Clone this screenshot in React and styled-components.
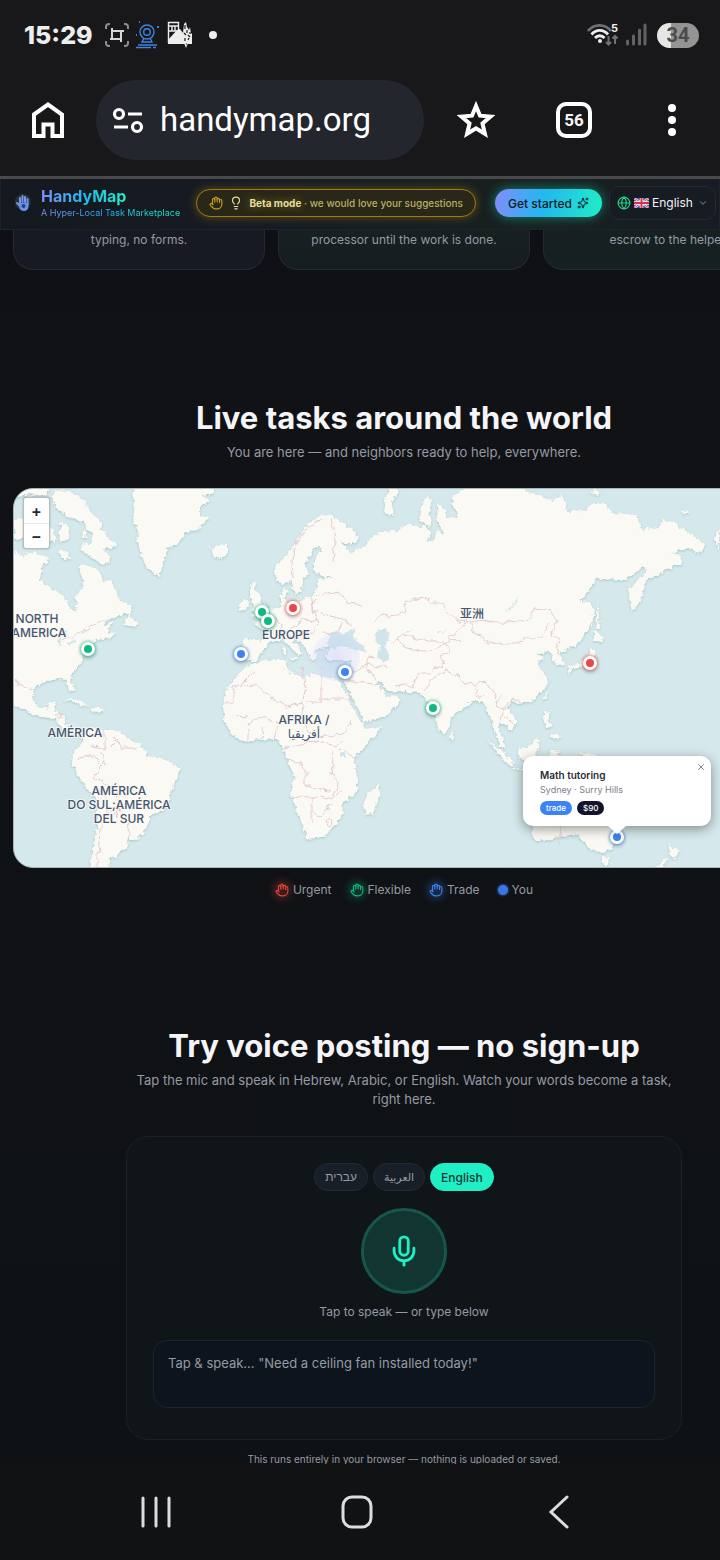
import { useState } from "react";
import styled, { createGlobalStyle, css } from "styled-components";
import {
  ChevronDown,
  Globe,
  Hand,
  Lightbulb,
  Mic,
  Sparkles,
  X,
} from "lucide-react";

const COLORS = {
  mint: "#20eec4",
  violet: "#818cf8",
  sky: "#22b8f0",
  urgent: "#ef4444",
  flexible: "#10b981",
  trade: "#3b82f6",
  text: "#f5f5f8",
  muted: "#969aa2",
};

const GlobalStyle = createGlobalStyle`
  * {
    box-sizing: border-box;
  }

  body {
    margin: 0;
    background: #0f1114;
    color: ${COLORS.text};
    font-family: Inter, "Liberation Sans", "DejaVu Sans", sans-serif;
  }

  button, input, select, textarea {
    font: inherit;
    color: inherit;
  }

  button {
    padding: 0;
    border: 0;
    background: none;
    cursor: pointer;
  }

  svg {
    display: block;
    flex-shrink: 0;
  }

  h2, p, ul {
    margin: 0;
    padding: 0;
  }
`;

const Shell = styled.div`
  display: flex;
  flex-direction: column;
  height: 100vh;
  overflow: hidden;
`;

// Phone status bar
const StatusBar = styled.div`
  display: flex;
  justify-content: space-between;
  align-items: center;
  height: 70px;
  padding: 0 21px 0 24px;
  background: #18181a;
`;

const StatusGroup = styled.div`
  display: flex;
  align-items: center;
  gap: 6px;
`;

const Clock = styled.span`
  margin-right: 6px;
  font-size: 25px;
  font-weight: 800;
  line-height: 30px;
  color: #eeeeee;
`;

const Dot = styled.span`
  width: 8px;
  height: 8px;
  margin-left: 10px;
  border-radius: 50%;
  background: #eeeeee;
`;

const Battery = styled.span`
  width: 42px;
  height: 25px;
  margin-left: 4px;
  border-radius: 13px;
  background: linear-gradient(90deg, #e6e6e6 34%, #949494 34%);
  color: #4b4b4b;
  font-family: Roboto, sans-serif;
  font-size: 20px;
  font-weight: 700;
  line-height: 25px;
  text-align: center;
`;

// Browser toolbar
const Toolbar = styled.div`
  display: flex;
  align-items: center;
  height: 109px;
  padding: 0 28px 6px 28px;
  border-bottom: 3px solid #49494c;
  background: #18181a;
`;

const AddressBar = styled.label`
  display: flex;
  flex: 1;
  align-items: center;
  gap: 16px;
  min-width: 0;
  height: 80px;
  margin: 0 32px 0 28px;
  padding: 0 16px;
  border-radius: 40px;
  background: #24262e;

  > input {
    flex: 1;
    min-width: 0;
    padding: 0;
    border: 0;
    outline: 0;
    background: none;
    font-family: Roboto, sans-serif;
    font-size: 33px;
    line-height: 44px;
    color: #ffffff;
  }
`;

const ToolbarActions = styled.div`
  display: flex;
  align-items: center;
  gap: 58px;
`;

const ToolbarButton = styled.button`
  display: grid;
  place-items: center;
  width: 40px;
  height: 40px;
`;

const TabCount = styled.span`
  width: 36px;
  height: 36px;
  border: 4px solid #ffffff;
  border-radius: 10px;
  font-family: Roboto, sans-serif;
  font-size: 17px;
  font-weight: 700;
  line-height: 28px;
`;

const Viewport = styled.main`
  flex: 1;
  min-height: 0;
  overflow: hidden;
  background: linear-gradient(#0d0f15, #101216 180px, #0f1215);
`;

// Site header
const Header = styled.header`
  display: flex;
  align-items: center;
  height: 51px;
  padding: 0 3px 2px 14px;
  border: 1px solid #1e2329;
  border-top: 0;
  background: linear-gradient(90deg, #141920, #171c24 40%, #18211f 75%, #171c24);
`;

const Brand = styled.a`
  display: flex;
  flex: 1;
  align-items: center;
  gap: 10px;
  text-decoration: none;
  white-space: nowrap;
`;

const gradientText = css`
  background: linear-gradient(90deg, ${COLORS.violet}, ${COLORS.sky} 50%, ${COLORS.mint});
  background-clip: text;
  color: transparent;
`;

const BrandText = styled.span`
  display: flex;
  flex-direction: column;
`;

const BrandName = styled.span`
  ${gradientText}
  align-self: flex-start;
  font-size: 16px;
  font-weight: 700;
  line-height: 20px;
`;

const Tagline = styled.span`
  ${gradientText}
  align-self: flex-start;
  font-size: 9px;
  line-height: 14px;
`;

const BetaPill = styled.button`
  display: flex;
  align-items: center;
  gap: 6px;
  height: 28px;
  padding: 0 12px;
  border: 1px solid #a07a14;
  border-radius: 14px;
  background: #292718;
  box-shadow: 0 0 10px #8a6a10aa;
  color: #b9ad66;
  font-size: 10px;
  font-weight: 500;
  white-space: nowrap;

  strong {
    color: #e5dba0;
    font-weight: 700;
    text-shadow: 0 0 8px #c9a22799;
  }
`;

const StartButton = styled.button`
  display: flex;
  align-items: center;
  gap: 5px;
  height: 28px;
  margin: 0 7px 0 19px;
  padding: 0 13px;
  border-radius: 14px;
  background: linear-gradient(100deg, ${COLORS.violet}, ${COLORS.sky} 45%, ${COLORS.mint});
  box-shadow: 0 0 12px #16b8a0aa;
  color: #0b1a24;
  font-size: 12px;
  font-weight: 500;
  white-space: nowrap;
`;

const LanguageBox = styled.label`
  display: flex;
  align-items: center;
  gap: 3px;
  height: 34px;
  padding: 0 7px;
  border: 1px solid #252a31;
  border-radius: 10px;
  background: #171b22;

  > select {
    appearance: none;
    width: 43px;
    padding: 0;
    border: 0;
    outline: 0;
    background: none;
    font-size: 12px;
    line-height: 16px;
  }
`;

// Page content keeps a tablet width and runs off narrow screens
const Content = styled.div`
  width: max(100%, 808px);
  padding: 0 13px;
`;

const Steps = styled.div`
  display: grid;
  grid-template-columns: repeat(3, 1fr);
  gap: 13px;
`;

const StepCard = styled.div`
  height: 40px;
  border: 1px solid #262b31;
  border-top: 0;
  border-radius: 0 0 20px 20px;
  background: ${({ $tint }) => $tint};
  color: ${COLORS.muted};
  font-size: 12px;
  line-height: 20px;
  text-align: center;
`;

const Section = styled.section`
  display: flex;
  flex-direction: column;
  align-items: center;
  padding-top: 128px;
`;

const Title = styled.h2`
  font-size: 31px;
  font-weight: 700;
  line-height: 40px;
  text-align: center;
`;

const Lead = styled.p`
  max-width: 560px;
  margin-top: 5px;
  color: ${COLORS.muted};
  font-size: 13px;
  line-height: 19px;
  text-align: center;
`;

const MapFrame = styled.div`
  position: relative;
  width: 100%;
  height: 380px;
  margin-top: 26px;
  border: 1px solid #a9b6b9;
  border-radius: 20px;
  background: #d5e8eb;
  color: #1f2937;
  overflow: hidden;

  > svg {
    width: 100%;
    height: 100%;
  }
`;

const ZoomControl = styled.div`
  position: absolute;
  top: 8px;
  left: 9px;
  display: flex;
  flex-direction: column;
  border: 1px solid #b5bfc2;
  border-radius: 3px;
  background: #ffffff;
  box-shadow: 0 0 2px #00000055;

  > button {
    width: 25px;
    height: 25px;
    font-size: 16px;
    font-weight: 600;
    line-height: 24px;
  }

  > button + button {
    border-top: 1px solid #e2eaec;
  }
`;

const Pin = styled.button`
  position: absolute;
  left: ${({ $x }) => $x - 7}px;
  top: ${({ $y }) => $y - 7}px;
  width: 14px;
  height: 14px;
  border: 3px solid #ffffff;
  border-radius: 50%;
  background: ${({ $color }) => $color};
  box-shadow: 0 0 3px 1px ${({ $color }) => $color}99, 0 2px 4px #00000044;
`;

const Popup = styled.div`
  position: absolute;
  left: 509px;
  top: 267px;
  width: 188px;
  padding: 11px 17px;
  border-radius: 10px;
  background: #ffffff;
  box-shadow: 0 3px 12px #00000066;

  &::after {
    content: "";
    position: absolute;
    left: 85px;
    bottom: -8px;
    border: solid transparent;
    border-width: 8px 9px 0;
    border-top-color: #ffffff;
  }

  > button {
    position: absolute;
    top: 6px;
    right: 5px;
    color: #666666;
  }
`;

const PopupTitle = styled.p`
  font-size: 10px;
  font-weight: 600;
  line-height: 16px;
  color: #2c2c33;
`;

const PopupPlace = styled.p`
  font-size: 9px;
  line-height: 14px;
  color: #7c828c;
`;

const TagRow = styled.div`
  display: flex;
  gap: 5px;
  margin-top: 4px;
`;

const Tag = styled.span`
  padding: 0 6px;
  border-radius: 7px;
  background: ${({ $color }) => $color};
  color: #ffffff;
  font-size: 8px;
  font-weight: 500;
  line-height: 14px;
`;

const Legend = styled.ul`
  display: flex;
  gap: 18px;
  margin-top: 13px;
  list-style: none;
`;

const LegendItem = styled.li`
  display: flex;
  align-items: center;
  gap: 4px;
  color: ${COLORS.muted};
  font-size: 12px;
  line-height: 17px;

  > svg {
    color: ${({ $color }) => $color};
    border-radius: 50%;
    background: ${({ $color }) => $color}33;
    box-shadow: 0 0 8px 1px ${({ $color }) => $color}66;
  }
`;

const YouDot = styled.span`
  width: 10px;
  height: 10px;
  border-radius: 50%;
  background: #3b76e8;
  box-shadow: 0 0 3px #3b76e8;
`;

// Voice demo
const VoiceCard = styled.form`
  display: flex;
  flex-direction: column;
  align-items: center;
  width: 100%;
  max-width: 556px;
  margin-top: 27px;
  padding: 26px;
  border: 1px solid #1a2224;
  border-radius: 22px;
  background: #101518;
`;

const LanguageTabs = styled.div`
  display: flex;
  gap: 5px;
`;

const LanguageTab = styled.button`
  height: 28px;
  padding: 0 10px;
  border: 1px solid ${({ $active }) => ($active ? COLORS.mint : "#232a33")};
  border-radius: 14px;
  background: ${({ $active }) => ($active ? COLORS.mint : "#191f28")};
  color: ${({ $active }) => ($active ? "#0c3a35" : COLORS.muted)};
  font-family: ${({ $font }) => $font};
  font-size: ${({ $size }) => $size}px;
  font-weight: ${({ $active }) => ($active ? 500 : 400)};
`;

const MicButton = styled.button`
  display: grid;
  place-items: center;
  width: 86px;
  height: 86px;
  margin-top: 17px;
  border: 3px solid #17564b;
  border-radius: 50%;
  background: #113531;
  color: ${COLORS.mint};
`;

const Hint = styled.label`
  margin: 9px 0 19px;
  color: ${COLORS.muted};
  font-size: 12px;
  line-height: 18px;
`;

const SpeechBox = styled.textarea`
  width: 100%;
  height: 68px;
  margin-bottom: 5px;
  padding: 12px 14px;
  border: 1px solid #1b2530;
  border-radius: 14px;
  outline: 0;
  background: #0d141d;
  font-size: 13px;
  line-height: 20px;
  resize: none;

  &::placeholder {
    color: ${COLORS.muted};
  }
`;

const Footnote = styled.p`
  margin-top: 12px;
  color: ${COLORS.muted};
  font-size: 10px;
  line-height: 14px;
`;

const SystemNav = styled.nav`
  display: grid;
  grid-template-columns: repeat(3, 1fr);
  justify-items: center;
  height: 96px;
  padding: 0 60px 0 55px;
  background: #111214;
  color: #dddddd;
`;

function CropIcon() {
  return (
    <svg width="24" height="24" viewBox="0 0 24 24" fill="none" strokeWidth="2">
      <path
        d="M1 6V4a3 3 0 0 1 3-3h1M19 1h1a3 3 0 0 1 3 3v2M23 18v2a3 3 0 0 1-3 3h-1M5 23H4a3 3 0 0 1-3-3v-2"
        stroke="#8d8d8d"
      />
      <path d="M8 8v9h8M5 17h3M16 19V8H8M19 8h-3M8 17v0M16 17v2M8 8V5" stroke="#d5d5d5" transform="rotate(90 12 12)" />
    </svg>
  );
}

function BeaconIcon() {
  return (
    <svg width="26" height="28" viewBox="0 0 26 28" fill="none" stroke="#3f83e0" strokeWidth="1.4">
      <circle cx="12" cy="11" r="7" />
      <circle cx="12" cy="11" r="3.3" />
      <path d="M9 17l-2 4h10l-2-4M3 24h19M1 26.5h15M18 26.5h3" />
      <path d="M23 5v2M22 6h2M1 14h1M4 1h1" strokeWidth="2" />
    </svg>
  );
}

function MosaicIcon() {
  return (
    <svg width="26" height="28" viewBox="0 0 26 28">
      <path d="M1.500 22V1.500h10V10H2M2 5h9M5 5v5M8 5v5" fill="none" stroke="#ededed" strokeWidth="1.4" />
      <path d="M1 23v-4l9-10 3-1 3 4 1-9 2-2 1 5 2 3 1-3 1 7 1-1v11z" fill="#ededed" />
      <path d="M17 22l2 5 2-5z" fill="#ededed" />
      <path
        d="M18 4v4M20 9v3M17 12l2 2M21 14l2 2M18 17v3M21 19l1-2M23 11v2M19 23h1"
        fill="none"
        stroke="#18181a"
        strokeWidth="1.2"
      />
    </svg>
  );
}

function WifiIcon() {
  return (
    <svg width="32" height="26" viewBox="0 0 32 26" fill="none" strokeWidth="2.8">
      <path d="M1 9c6-7.500 17-7.500 23 0" stroke="#707070" />
      <path d="M4.500 12.500c4.500-5.500 12-5.500 16.500 0M8 16c2.500-3 7-3 9.500 0" stroke="#ededed" />
      <circle cx="13" cy="19" r="2" fill="#ededed" />
      <path d="M21.500 14v8M19 20l2.500 2.500L24 20M28 22v-8M25.500 16.500L28 14l2.500 2.500" stroke="#707070" strokeWidth="2" />
      <text x="24" y="10" fill="#ededed" fontSize="11" fontWeight="700">
        5
      </text>
    </svg>
  );
}

function SignalIcon() {
  return (
    <svg width="22" height="24" viewBox="0 0 22 24" stroke="#626262" strokeWidth="3" strokeLinecap="round">
      <path d="M2.500 18v3M8.500 13v8M14.500 7v14M20 2v19" />
    </svg>
  );
}

function HomeIcon() {
  return (
    <svg width="40" height="40" viewBox="0 0 40 40" fill="none" stroke="#ffffff" strokeWidth="4">
      <path d="M6 14.500L20 4.500l14 10V36h-9.500V24.500h-9V36H6z" />
    </svg>
  );
}

function TuneIcon() {
  return (
    <svg width="32" height="28" viewBox="0 0 32 28" fill="none" stroke="#ffffff" strokeWidth="3.2">
      <circle cx="7" cy="8" r="4.5" />
      <circle cx="25" cy="21" r="4.5" />
      <path d="M16 8h14M2 21h14" />
    </svg>
  );
}

function StarIcon() {
  return (
    <svg width="40" height="40" viewBox="0 0 40 40" fill="none" stroke="#ffffff" strokeWidth="4">
      <path d="M20 6l4 9.700 10.500.900-8 6.900 2.400 10.200L20 28.300l-8.900 5.400 2.400-10.200-8-6.900 10.500-.900z" />
    </svg>
  );
}

function MoreIcon() {
  return (
    <svg width="8" height="32" viewBox="0 0 8 32" fill="#ffffff">
      <circle cx="4" cy="4" r="4" />
      <circle cx="4" cy="16" r="4" />
      <circle cx="4" cy="28" r="4" />
    </svg>
  );
}

function LogoIcon() {
  return (
    <svg width="16" height="20" viewBox="0 0 16 20">
      <circle cx="8" cy="9" r="8" fill="#27333c" />
      <g fill="none" stroke="#7697ee" strokeWidth="2" strokeLinecap="round">
        <path d="M5 10V5M7.500 9V3M10 9V4M12.500 11V6M5 13l-3-3" />
      </g>
      <path d="M4 10h9.500v3c0 3-2 5-4.500 5s-5-2-5-5z" fill="#6d91ea" />
      <circle cx="8.5" cy="13" r="2" fill="#26447d" />
    </svg>
  );
}

function FlagIcon() {
  return (
    <svg width="15" height="10" viewBox="0 0 15 10">
      <path d="M0 0h15v10H0z" fill="#3553a5" />
      <path d="M0 0l15 10M15 0L0 10" stroke="#ffffff" strokeWidth="2.2" />
      <path d="M0 0l15 10M15 0L0 10" stroke="#d92f48" />
      <path d="M7.500 0v10M0 5h15" stroke="#ffffff" strokeWidth="3.4" />
      <path d="M7.500 0v10M0 5h15" stroke="#d92f48" strokeWidth="2" />
    </svg>
  );
}

const LAND = [
  // North and Central America
  "M10 550L23 555 33 552 50 558 42 567 40 580 50 588 63 595 72 610 75 613 77 605 75 597 83 587 82 577 78 568 83 564 92 567 100 572 103 583 110 578 115 590 120 600 131 605 131 612 120 616 110 619 100 627 113 621 110 628 108 633 118 632 110 638 97 640 90 647 83 652 82 662 72 674 71 681 75 692 70 690 65 680 57 678 48 681 35 687 33 701 39 708 47 707 49 703 57 703 54 711 66 716 66 724 71 731 78 731 85 736 78 736 70 734 62 727 55 719 43 717 30 713 10 704z",
  // South America
  "M83 733L92 728 100 730 117 730 127 738 142 745 147 755 167 760 180 768 179 776 172 787 170 800 165 810 150 815 147 827 137 840 127 838 128 847 118 852 117 857 110 858 109 870 90 870 92 853 97 827 97 800 88 790 78 777 72 763 73 753 82 743z",
  // Greenland
  "M132 486L135 503 133 520 138 530 137 543 142 558 147 568 160 577 163 563 168 548 177 545 185 532 197 530 210 518 200 515 200 507 210 500 202 497 214 492 214 486z",
  // Canadian arctic islands
  "M54 491L52 500 57 509 67 516 82 522 88 530 93 534 91 543 82 545 80 550 90 556 100 563 108 565 110 558 103 550 117 545 110 540 103 530 100 522 92 513 87 505 80 497 72 492 60 490z",
  "M14 486h36l-4 10-18-2-14 5zM62 522l8 6-1 11-7 3-3-8zM59 549l8 3 5 7-10-1zM14 520l20-3 12 6-6 12-14 5-12-2zM82 532l4-2 1 6-4 1zM46 525l8 6 2 12-7-3z",
  // Newfoundland
  "M128 610l3 8 7 4-2 5-12-2 3-7z",
  // Caribbean
  "M64 700l7-2 11 4 7 4-8-1-10-4zM91 708l8-1 7 3-8 2-7-1zM68 680l5 8 1 4-5-8z",
  // Iceland
  "M207 545L212 548 220 545 227 543 230 552 220 559 211 556 214 551z",
  // Britain and Ireland
  "M250 585l6-3-1 8 5 3 1 7 5 7 4 4-6 5-14 2 5-6-4-2 3-6-4-7zM240 603l6-4 3 5-2 6-8 2z",
  // Eurasia
  "M322 514L310 522 300 533 293 547 283 560 275 567 276 580 282 585 290 580 295 595 302 590 303 580 308 573 305 563 312 552 315 546 322 548 314 560 314 571 325 577 334 577 318 580 318 588 312 597 300 600 287 602 284 598 288 592 284 588 281 595 280 607 270 609 267 620 253 623 262 630 262 640 243 639 242 650 245 660 255 662 263 652 268 643 283 640 290 647 298 655 303 654 293 640 288 637 293 635 302 643 308 653 312 662 317 657 315 650 325 648 331 648 326 655 328 661 340 661 354 661 345 672 343 680 349 692 354 701 363 718 364 723 388 715 402 700 394 695 387 697 376 682 379 681 388 691 406 692 421 693 426 701 432 704 437 725 444 735 450 726 451 718 473 701 482 701 491 718 493 728 496 735 500 746 505 748 503 738 498 730 500 721 511 731 518 721 507 708 511 702 519 704 532 701 547 685 546 676 541 670 538 661 544 658 536 655 550 652 557 666 565 665 560 655 563 651 577 645 590 628 595 611 590 602 580 601 590 589 597 579 626 580 644 566 647 572 628 590 632 613 643 597 645 582 657 575 682 563 680 555 672 553 687 548 700 553 707 545 688 532 673 522 662 520 660 527 642 529 637 515 613 513 603 502 590 505 587 512 573 510 570 515 562 495 553 500 530 493 520 486 470 486 453 495 452 503 458 517 448 518 443 505 437 505 438 523 446 535 438 530 432 542 427 542 431 532 420 520 421 506 427 497 432 499 429 514 432 525 420 527 407 523 400 530 383 532 370 537 366 546 358 549 350 553 340 540 347 544 356 544 358 536 353 530 340 522 332 515z",
  // Novaya Zemlya and arctic islands
  "M390 486l-5 14-1 13 9 3-2-12 6-10 1-8zM593 489l6 2-1 5-6-3zM682 511l7-1 1 3-7 1zM720 525l-5 12 3 15z",
  // Africa
  "M338 680L320 676 311 672 307 678 290 672 286 667 287 660 270 660 250 664 240 672 227 688 223 707 225 723 233 735 243 742 260 740 277 739 285 753 290 767 295 777 290 795 300 817 307 839 323 837 333 827 342 817 343 803 357 793 358 780 355 767 354 758 374 736 383 726 366 729 361 721 354 710 347 695z",
  // Madagascar and Sri Lanka
  "M379 783l1 13-7 18-8 1-2-8 4-15 7-3zM450 731l4 6-2 3-3-2z",
  // Mediterranean islands
  "M283 648l3-1v8l-3-1zM289 658l8-1-2 4zM318 664l8 1-3 1zM342 665l5-2-2 4z",
  // Japan, Sakhalin, Taiwan
  "M597 601l2 15 1 12-4 1 1-14zM594 630l10 7-3 5-7-1zM590 648l5 2 1 10-8 6-14 3-7-1 11-5 9-3zM567 669l5 0-2 6zM548 692l-3 8-2-3z",
  // Southeast Asia
  "M545 711l5 1-2 10 5 6-6-1-4-8zM551 733l8 0-1 7-6-2zM487 740l13 9 14 14 0 4-10-6-11-13zM498 740l6 9 0 0 1-3-4-8zM519 749l11-3 6-8 5 3-4 9-3 10-12 1-4-7zM512 768l15 2 20 2-1 1-20-1-13-2zM549 751l14-1-6 4 3 8-8-4zM579 752l20 4 18 8 12 10-20-3-18-8z",
  // Australia
  "M532 827l1 13 12 1 15-4 16-3 9 9 7 8 12 1 8-4 7-14 0-20-80-5z",
  "M602 857l8 1-3 9-5-5zM668 841l4 7 9 2-7 9-4-4zM668 858l-5 10h-8l8-9z",
];

const WATER = [
  // Black Sea, Caspian Sea, lakes
  "M330 648L327 642 331 634 338 630 343 635 350 630 357 629 352 637 362 644 366 652 355 650 342 646 336 649z",
  "M387 628L378 630 373 636 380 647 378 657 384 661 389 659 387 650 385 642 390 639z",
  "M519 595l-4 9-8 8-1-1 7-7zM61 631l5 0 2 4-6 2-2 9-3-3zM67 643l10-4-1 2-8 4zM340 752h5v5h-5zM405 632l7-2-6 4zM436 632l12-2-11 4z",
];

const BORDERS = [
  "M373 622l9-8 14 2 9-5-1-9 20-5 10 6 8 0 8 12 8 6 14 1 10-3 15 4 20-2 12-2 6-10 15 2 6 8-4 16 8 6-4 14",
  "M470 622l6 12 14 8 20 3 14-6 18-2 8-14",
  "M447 640l10-8 12-14M396 640l12 8 20 4 14-6 8-6 10 2M393 643l9-10 10 5 16 3 16 0 6 10-10 5 4 8-14 9-10 0-8 14-8-3-9 2",
  "M390 668l-4-4-10 4-8-5-8 3M374 680l-8-14 2-10 6 1M347 681l14 0 12 4 8-1M352 673l12-6",
  "M424 691l8-12 14-10 6 4 16 10 8 2 10-3 8 10 4 16 8-1 6-8 10 4M476 688l2 10 5-4M496 704l6-10M501 720l3-12",
  "M293 642l8-11 12 2 6-9-4-10-4-10 8-8 20-4 10 12 14 2M282 632l12-6 10-6 14 1M275 618l7 8-4 12M312 596l0 14 12 4 14 4 12 6M322 633l14 2 6-12",
  "M293 578l-1-18 4-16 10-16 10-6 6-2M331 519l4 20-2 24",
  "M242 684l13-13M225 704l8-3 0-14 22-2 24 18 8 4 15-4 4-16-5-20M321 676v26h-14M321 699h32l-1-5M302 704l2 20 4 8 10 6 18-2 10-4 6-12",
  "M248 728l6-10 12 1 8 4 12-4 16 2M236 716l12 1M248 742l0-12M262 740l1-14M274 738l3-11M283 748l14-1 10-7 14 2 14 4 8-4M286 760l12 1 8 10 0 14 14 5 11 1M334 753l-3 20 8 9-6 14M292 796l20 1 8-2 12 4 10-8M312 797v26M312 812l10 5 10-14M354 758l-14-10M330 826l2-3-2-3-4 3z",
  "M91 746l14 2 0-16M92 755l10 10-8 12 10 6 14 10 2 12-4 12M98 790l8 6 0 20-6 14-3 38M105 765l-4-14M113 736l10 12 16 0M118 808l12 14-3 16M78 760l8-6 6 3M112 745l6-6M118 815l-10-3",
  "M62 641l12-6 14-6 12-8 8 0M14 680l12 8 8 2M46 711l4-7M55 715l10-2M56 718l6-3",
  "M505 716l12 12M560 826v20",
];

const LABELS = [
  { x: 37, y: 623, text: "NORTH" },
  { x: 39, y: 637, text: "AMERICA" },
  { x: 286, y: 639, text: "EUROPE" },
  { x: 472, y: 618, text: "亚洲" },
  { x: 304, y: 724, text: "AFRIKA /" },
  { x: 304, y: 738, text: "أفريقيا" },
  { x: 75, y: 737, text: "AMÉRICA" },
  { x: 119, y: 795, text: "AMÉRICA" },
  { x: 119, y: 809, text: "DO SUL;AMÉRICA" },
  { x: 119, y: 823, text: "DEL SUR" },
];

const MapLabel = styled.text`
  fill: #44566f;
  stroke: #fbf9f5cc;
  stroke-width: 2px;
  paint-order: stroke;
  font-family: Inter, "Noto Sans CJK SC", "DejaVu Sans", sans-serif;
  font-size: 12px;
  font-weight: 500;
  text-anchor: middle;
`;

function WorldMap() {
  return (
    <svg viewBox="14 489 780 378" preserveAspectRatio="xMinYMin slice" aria-hidden="true">
      <defs>
        <filter id="coast" filterUnits="userSpaceOnUse" x="0" y="470" width="820" height="420">
          <feTurbulence type="fractalNoise" baseFrequency="0.22" numOctaves="3" seed="4" />
          <feDisplacementMap in="SourceGraphic" scale="6" xChannelSelector="R" yChannelSelector="G" />
          <feDropShadow dx="0" dy="1" stdDeviation="1" floodColor="#8fb9b9" floodOpacity="0.7" />
        </filter>
        <filter id="border" filterUnits="userSpaceOnUse" x="0" y="470" width="820" height="420">
          <feTurbulence type="fractalNoise" baseFrequency="0.13" numOctaves="2" seed="9" />
          <feDisplacementMap in="SourceGraphic" scale="7" xChannelSelector="R" yChannelSelector="G" />
        </filter>
        <radialGradient id="halo">
          <stop offset="0" stopColor="#b8c4ff" stopOpacity="0.4" />
          <stop offset="1" stopColor="#c9d2ff" stopOpacity="0.2" />
        </radialGradient>
      </defs>
      <g filter="url(#coast)">
        <path d={LAND.join("")} fill="#fbf9f4" />
        <path d={WATER.join("")} fill="#d0e5e9" />
      </g>
      <path d={BORDERS.join("")} filter="url(#border)" fill="none" stroke="#e2cbcf" />
      <circle cx="336" cy="657" r="24" fill="url(#halo)" />
      {LABELS.map(({ x, y, text }) => (
        <MapLabel key={`${text}-${y}`} x={x} y={y}>
          {text}
        </MapLabel>
      ))}
    </svg>
  );
}

const PINS = [
  { name: "New York", x: 74, y: 160, color: COLORS.flexible },
  { name: "London", x: 248, y: 123, color: COLORS.flexible },
  { name: "Paris", x: 254, y: 132, color: COLORS.flexible },
  { name: "Berlin", x: 279, y: 119, color: COLORS.urgent },
  { name: "Lisbon", x: 227, y: 165, color: COLORS.trade },
  { name: "Tel Aviv", x: 331, y: 183, color: COLORS.trade },
  { name: "Mumbai", x: 419, y: 219, color: COLORS.flexible },
  { name: "Tokyo", x: 576, y: 174, color: COLORS.urgent },
  { name: "Sydney", x: 603, y: 348, color: COLORS.trade },
];

const LEGEND = [
  { label: "Urgent", color: "#e5483a" },
  { label: "Flexible", color: COLORS.flexible },
  { label: "Trade", color: COLORS.trade },
];

const LANGUAGES = [
  { label: "עברית", font: '"Liberation Sans", sans-serif', size: 12 },
  { label: "العربية", font: '"DejaVu Sans", sans-serif', size: 11 },
  { label: "English", font: "Inter, sans-serif", size: 12 },
];

function BrowserBar() {
  return (
    <Toolbar>
      <ToolbarButton aria-label="Home">
        <HomeIcon />
      </ToolbarButton>
      <AddressBar>
        <TuneIcon />
        <input type="text" aria-label="Address" defaultValue="handymap.org" />
      </AddressBar>
      <ToolbarActions>
        <ToolbarButton aria-label="Bookmark">
          <StarIcon />
        </ToolbarButton>
        <ToolbarButton aria-label="Open tabs">
          <TabCount>56</TabCount>
        </ToolbarButton>
        <ToolbarButton aria-label="More">
          <MoreIcon />
        </ToolbarButton>
      </ToolbarActions>
    </Toolbar>
  );
}

function SiteHeader() {
  return (
    <Header>
      <Brand href="#">
        <LogoIcon />
        <BrandText>
          <BrandName>HandyMap</BrandName>
          <Tagline>A Hyper-Local Task Marketplace</Tagline>
        </BrandText>
      </Brand>
      <BetaPill>
        <Hand size={14} color="#c39a22" />
        <Lightbulb size={14} color="#e5dba0" />
        <span>
          <strong>Beta mode</strong> · we would love your suggestions
        </span>
      </BetaPill>
      <StartButton>
        Get started
        <Sparkles size={12} />
      </StartButton>
      <LanguageBox>
        <Globe size={14} color="#22d38c" />
        <FlagIcon />
        <select aria-label="Language" defaultValue="English">
          <option>English</option>
        </select>
        <ChevronDown size={10} color="#9ca3af" />
      </LanguageBox>
    </Header>
  );
}

function LiveMap() {
  return (
    <MapFrame>
      <WorldMap />
      <ZoomControl>
        <button aria-label="Zoom in">+</button>
        <button aria-label="Zoom out">−</button>
      </ZoomControl>
      {PINS.map(({ name, x, y, color }) => (
        <Pin key={name} aria-label={name} $x={x} $y={y} $color={color} />
      ))}
      <Popup>
        <PopupTitle>Math tutoring</PopupTitle>
        <PopupPlace>Sydney · Surry Hills</PopupPlace>
        <TagRow>
          <Tag $color={COLORS.trade}>trade</Tag>
          <Tag $color="#11142a">$90</Tag>
        </TagRow>
        <button aria-label="Close">
          <X size={10} />
        </button>
      </Popup>
    </MapFrame>
  );
}

function VoiceDemo() {
  const [language, setLanguage] = useState("English");

  return (
    <VoiceCard>
      <LanguageTabs>
        {LANGUAGES.map(({ label, font, size }) => (
          <LanguageTab
            key={label}
            type="button"
            $active={label === language}
            $font={font}
            $size={size}
            onClick={() => setLanguage(label)}
          >
            {label}
          </LanguageTab>
        ))}
      </LanguageTabs>
      <MicButton type="button" aria-label="Speak">
        <Mic size={34} />
      </MicButton>
      <Hint htmlFor="speech">Tap to speak — or type below</Hint>
      <SpeechBox id="speech" placeholder={'Tap & speak... "Need a ceiling fan installed today!"'} />
    </VoiceCard>
  );
}

function App() {
  return (
    <Shell>
      <GlobalStyle />
      <StatusBar>
        <StatusGroup>
          <Clock>15:29</Clock>
          <CropIcon />
          <BeaconIcon />
          <MosaicIcon />
          <Dot />
        </StatusGroup>
        <StatusGroup>
          <WifiIcon />
          <SignalIcon />
          <Battery>34</Battery>
        </StatusGroup>
      </StatusBar>
      <BrowserBar />
      <Viewport>
        <SiteHeader />
        <Content>
          <Steps>
            <StepCard $tint="#171a22">typing, no forms.</StepCard>
            <StepCard $tint="linear-gradient(#182021, #161d20)">processor until the work is done.</StepCard>
            <StepCard $tint="#172020">escrow to the helper.</StepCard>
          </Steps>
          <Section>
            <Title>Live tasks around the world</Title>
            <Lead>You are here — and neighbors ready to help, everywhere.</Lead>
            <LiveMap />
            <Legend>
              {LEGEND.map(({ label, color }) => (
                <LegendItem key={label} $color={color}>
                  <Hand size={14} />
                  {label}
                </LegendItem>
              ))}
              <LegendItem>
                <YouDot />
                You
              </LegendItem>
            </Legend>
          </Section>
          <Section>
            <Title>Try voice posting — no sign-up</Title>
            <Lead>Tap the mic and speak in Hebrew, Arabic, or English. Watch your words become a task, right here.</Lead>
            <VoiceDemo />
            <Footnote>This runs entirely in your browser — nothing is uploaded or saved.</Footnote>
          </Section>
        </Content>
      </Viewport>
      <SystemNav>
        <button aria-label="Recent apps">
          <svg width="32" height="32" viewBox="0 0 32 32" stroke="currentColor" strokeWidth="3" strokeLinecap="round">
            <path d="M3 2v28M16 2v28M29 2v28" />
          </svg>
        </button>
        <button aria-label="Home screen">
          <svg width="34" height="34" viewBox="0 0 34 34" fill="none" stroke="currentColor" strokeWidth="3">
            <rect x="3" y="2" width="28" height="30" rx="9" />
          </svg>
        </button>
        <button aria-label="Back">
          <svg width="24" height="34" viewBox="0 0 24 34" fill="none" stroke="currentColor" strokeWidth="3" strokeLinecap="round">
            <path d="M20 2L4 17l16 15" />
          </svg>
        </button>
      </SystemNav>
    </Shell>
  );
}

export default App;
